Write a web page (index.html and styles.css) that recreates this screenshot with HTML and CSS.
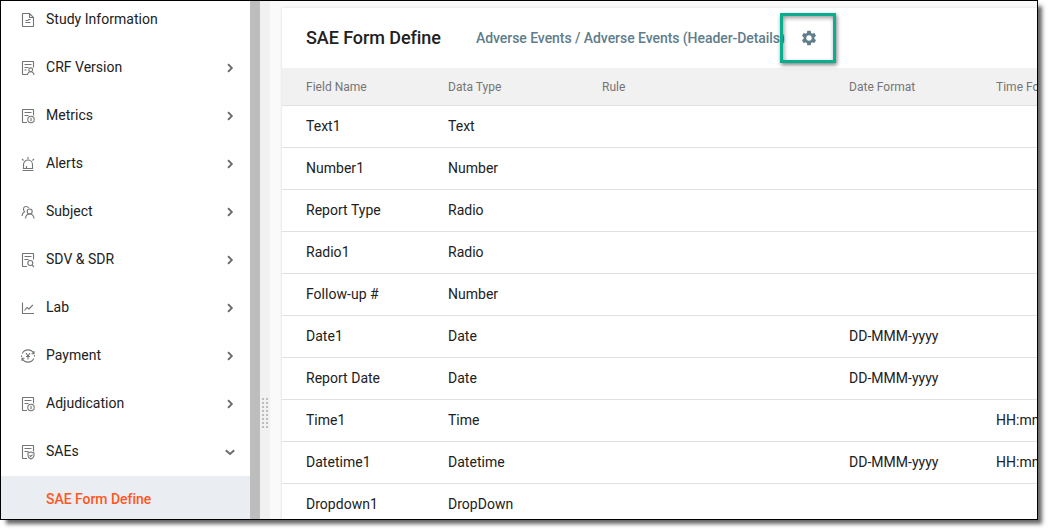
FILE: index.html
```
<!DOCTYPE html>
<html lang="en">
<head>
    <meta charset="UTF-8">
    <meta name="viewport" content="width=device-width, initial-scale=1.0">
    <title>SAE Form Define</title>
    <link rel="stylesheet" href="styles.css">
</head>
<body>
    <svg class="symbols">
        <symbol id="doc" viewBox="0 0 14 14"><path d="M8.500 .5H1.500v13h11V4.500zM8.500 .5v4h4M4.500 7.500h3M4.500 9.500h5M7 6.500h2.500"/></symbol>
        <symbol id="form" viewBox="0 0 14 14"><path d="M6 13.500H1.500V.5h11V6.500M3.500 3.500h7M3.500 6.500h4"/></symbol>
        <symbol id="right" viewBox="0 0 10 10"><path d="M3 1.200 6.800 5 3 8.800"/></symbol>
        <symbol id="down" viewBox="0 0 10 10"><path d="M.8 3.200 5 7l4.200-3.800"/></symbol>
    </svg>

    <div class="window">
        <nav class="sidebar">
            <a class="item">
                <svg class="icon"><use href="#doc"/></svg>
                <span>Study Information</span>
            </a>
            <a class="item">
                <svg class="icon"><use href="#form"/><path d="M3.500 9h2"/><circle cx="9.700" cy="8.800" r="1.900"/><path d="M6.500 14c.2-2.200 1.400-3.300 3.200-3.300s3 1.100 3.300 3.300"/></svg>
                <span>CRF Version</span>
                <svg class="arrow"><use href="#right"/></svg>
            </a>
            <a class="item">
                <svg class="icon"><use href="#form"/><circle cx="10" cy="10.500" r="3.200"/><path d="M10 8.800v3.400"/></svg>
                <span>Metrics</span>
                <svg class="arrow"><use href="#right"/></svg>
            </a>
            <a class="item">
                <svg class="icon"><path d="M1.500 13.500h11M2.500 11.500V7.500a4.500 4.500 0 0 1 9 0v4zM5.500 11V9M7 0v2M1 2l1.500 1.500M13 2l-1.500 1.500"/></svg>
                <span>Alerts</span>
                <svg class="arrow"><use href="#right"/></svg>
            </a>
            <a class="item">
                <svg class="icon"><path d="M1 11c.2-2.300 1-3.500 2.500-4.300C1.500 4.500 2.500 1.500 5 1.500c1.300 0 2.200.5 2.700 1.500"/><circle cx="8.700" cy="6.500" r="2.500"/><path d="M4.500 13.500C4.700 10.500 6 9 8.700 9s4 1.500 4.300 4.500"/></svg>
                <span>Subject</span>
                <svg class="arrow"><use href="#right"/></svg>
            </a>
            <a class="item">
                <svg class="icon"><use href="#form"/><circle cx="9.300" cy="10" r="2.500"/><path d="m11 12 2 2"/></svg>
                <span>SDV &amp; SDR</span>
                <svg class="arrow"><use href="#right"/></svg>
            </a>
            <a class="item">
                <svg class="icon"><path d="M1.500 1.500v11H13M3.500 9.500l2.500-3 2 1.500 3.800-4"/></svg>
                <span>Lab</span>
                <svg class="arrow"><use href="#right"/></svg>
            </a>
            <a class="item">
                <svg class="icon"><path d="M1.300 4.500a6.300 6.300 0 0 1 11.400 0M12.700 9.500a6.300 6.300 0 0 1-11.400 0M.6 8V6.500M13.400 6v1.500M13 2v2.700h-2.500M1 12V9.300h2.500M5 4l2 3 2-3M7 7v3.500M5 7.500h4"/></svg>
                <span>Payment</span>
                <svg class="arrow"><use href="#right"/></svg>
            </a>
            <a class="item">
                <svg class="icon"><use href="#form"/><circle cx="10" cy="10.500" r="3.200"/><path d="M10 8.800v3.400"/></svg>
                <span>Adjudication</span>
                <svg class="arrow"><use href="#right"/></svg>
            </a>
            <a class="item">
                <svg class="icon"><use href="#form"/><path d="M10 7 13 8v2.700c0 1.700-1.400 2.500-3 3.300-1.600-.8-3-1.600-3-3.300V8zM8.500 10.300l1.200 1.200 1.800-1.900"/></svg>
                <span>SAEs</span>
                <svg class="arrow"><use href="#down"/></svg>
            </a>
            <a class="item sub active"><span>SAE Form Define</span></a>
        </nav>
        <div class="scrollbar"></div>
        <div class="splitter"><div class="grip"></div></div>

        <main class="content">
            <section class="card">
                <header class="card-header">
                    <h1>SAE Form Define</h1>
                    <span class="path">Adverse Events / Adverse Events (Header-Details)</span>
                    <span class="settings">
                        <svg class="gear" viewBox="0 0 24 24"><path d="M19.140 12.940c.04-.3.060-.61.060-.94 0-.32-.02-.64-.07-.94l2.030-1.580a.49.49 0 0 0 .12-.61l-1.920-3.320a.49.49 0 0 0-.59-.22l-2.390.96a7 7 0 0 0-1.620-.94l-.36-2.540a.48.48 0 0 0-.48-.41h-3.840a.47.47 0 0 0-.47.41l-.36 2.540c-.59.24-1.130.57-1.620.94l-2.390-.96a.48.48 0 0 0-.59.22L2.740 8.870a.47.47 0 0 0 .12.61l2.030 1.580a6 6 0 0 0-.02 1.880l-2.030 1.580a.49.49 0 0 0-.12.61l1.920 3.320c.12.220.37.290.59.220l2.390-.96c.5.380 1.030.7 1.620.94l.36 2.540c.05.24.24.41.48.41h3.840c.24 0 .44-.17.47-.41l.36-2.540a7 7 0 0 0 1.620-.94l2.390.96c.22.080.47 0 .59-.22l1.920-3.320a.47.47 0 0 0-.12-.61zM12 15.600a3.600 3.600 0 1 1 0-7.200 3.600 3.600 0 0 1 0 7.200z"/></svg>
                        <span class="highlight"></span>
                    </span>
                </header>
                <table>
                    <thead>
                        <tr><th class="name">Field Name</th><th class="type">Data Type</th><th class="rule">Rule</th><th class="date">Date Format</th><th class="time">Time Format</th></tr>
                    </thead>
                    <tbody>
                        <tr><td>Text1</td><td>Text</td><td></td><td></td><td></td></tr>
                        <tr><td>Number1</td><td>Number</td><td></td><td></td><td></td></tr>
                        <tr><td>Report Type</td><td>Radio</td><td></td><td></td><td></td></tr>
                        <tr><td>Radio1</td><td>Radio</td><td></td><td></td><td></td></tr>
                        <tr><td>Follow-up #</td><td>Number</td><td></td><td></td><td></td></tr>
                        <tr><td>Date1</td><td>Date</td><td></td><td>DD-MMM-yyyy</td><td></td></tr>
                        <tr><td>Report Date</td><td>Date</td><td></td><td>DD-MMM-yyyy</td><td></td></tr>
                        <tr><td>Time1</td><td>Time</td><td></td><td></td><td>HH:mm</td></tr>
                        <tr><td>Datetime1</td><td>Datetime</td><td></td><td>DD-MMM-yyyy</td><td>HH:mm</td></tr>
                        <tr><td>Dropdown1</td><td>DropDown</td><td></td><td></td><td></td></tr>
                    </tbody>
                </table>
            </section>
        </main>
    </div>
</body>
</html>
```
FILE: styles.css
```
* {
    box-sizing: border-box;
}
body {
    margin: 0;
    height: 532px;
    overflow: hidden;
    background: #fff;
    color: #212121;
    font-family: Roboto, sans-serif;
    font-size: 14px;
    letter-spacing: 0.02px;
}
.symbols {
    display: none;
}
.window {
    display: flex;
    width: 1038px;
    height: 520px;
    overflow: hidden;
    border: 1px solid #000;
    box-shadow: 5px 5px 4px -1px rgba(0, 0, 0, 0.6);
}

/* sidebar */
.sidebar {
    flex: none;
    width: 249px;
    margin-top: -5px;
    background: #fff;
}
.item {
    display: flex;
    align-items: center;
    height: 48px;
    padding: 0 15px 0 20px;
}
.item span {
    flex: 1;
    margin-top: -2px;
}
.icon {
    width: 14px;
    height: 14px;
    margin-right: 11px;
    overflow: visible;
    fill: none;
    stroke: #757575;
    stroke-width: 1.1;
}
.arrow {
    width: 10px;
    height: 10px;
    fill: none;
    stroke: #6b6b6b;
    stroke-width: 1.9;
}
.item.sub {
    padding-left: 45px;
}
.item.active {
    background: #eaedf1;
    color: #ff5722;
    font-weight: 500;
    letter-spacing: -0.04px;
}
.scrollbar {
    flex: none;
    width: 10px;
    background: #bdbdbd;
}
.splitter {
    flex: none;
    width: 10px;
    padding: 397px 0 0 1px;
    background: #f1f1f1;
}
.grip {
    width: 8px;
    height: 32px;
    background: conic-gradient(from 0deg at 2px 2px, transparent 75%, #bdbdbd 0) 1px 0 / 4px 4px;
}

/* content */
.content {
    flex: none;
    width: 767px;
    padding: 7px 0 0 12px;
    overflow: hidden;
    background: #fafafa;
}
.card {
    height: 520px;
    background: #fff;
    box-shadow: 0 0 3px rgba(0, 0, 0, 0.12);
}
.card-header {
    display: flex;
    align-items: center;
    height: 60px;
    padding-left: 24px;
}
h1 {
    width: 170px;
    margin: -2px 0 0;
    font-size: 18px;
    font-weight: 500;
    letter-spacing: -0.07px;
}
.path {
    width: 317px;
    white-space: nowrap;
    color: #607d8b;
    font-weight: 500;
    letter-spacing: -0.06px;
}
.settings {
    position: relative;
    display: flex;
    margin-left: 7px;
}
.gear {
    width: 18px;
    height: 18px;
    fill: #607d8b;
}
.highlight {
    position: absolute;
    top: -16px;
    left: -20px;
    width: 56px;
    height: 50px;
    border: 3px solid #09ae8f;
    box-shadow: 1px 2px 4px rgba(0, 0, 0, 0.5), inset 1px 2px 4px rgba(0, 0, 0, 0.4);
}
table {
    table-layout: fixed;
    width: 850px;
    border-collapse: separate;
    border-spacing: 0;
}
th, td {
    height: 42px;
    padding: 0 0 1px;
    border-bottom: 1px solid #e0e0e0;
    text-align: left;
    white-space: nowrap;
}
th {
    height: 38px;
    padding: 1px 0 0;
    background: #f1f1f1;
    color: #757575;
    font-size: 12px;
    font-weight: 400;
}
th:first-child, td:first-child {
    padding-left: 24px;
}
.name { width: 166px; }
.type { width: 154px; }
.rule { width: 247px; }
.date { width: 147px; }
```
